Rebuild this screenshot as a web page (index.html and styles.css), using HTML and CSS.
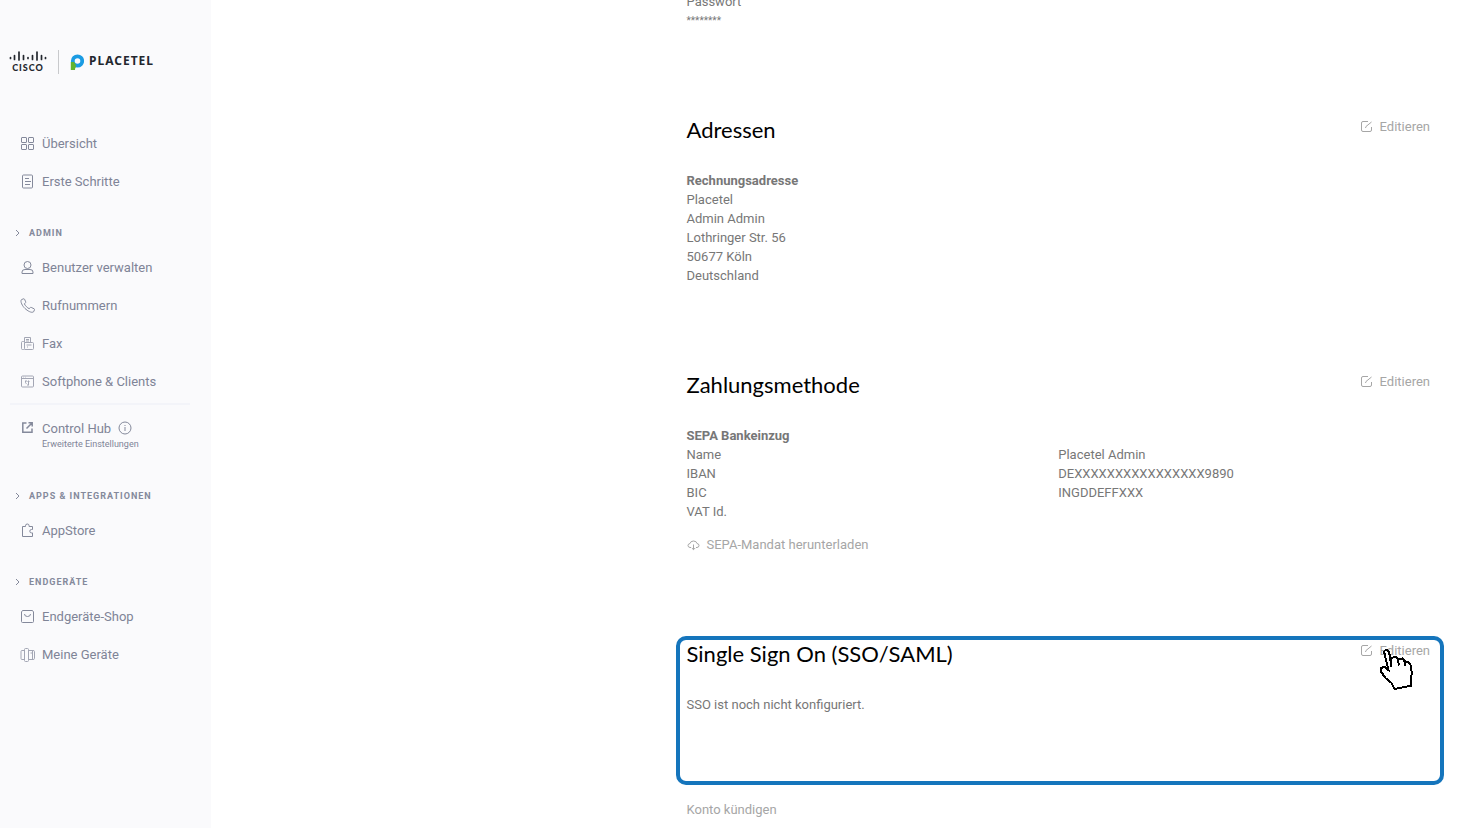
FILE: index.html
```html
<!doctype html>
<html lang="de">
<head>
<meta charset="utf-8">
<title>Placetel - Einstellungen</title>
<link rel="stylesheet" href="styles.css">
</head>
<body>

<div class="page">
	<nav class="sidebar">
		<a class="logo" href="#">
			<span class="cisco">
				<svg width="38" height="12" viewBox="0 0 38 12" fill="none" stroke="#23272e" stroke-width="1.700" stroke-linecap="round">
					<path d="M1.500 7.500v1M5.500 5.500v4M10 2v8M14.500 5.500v4M19 7.500v1M23.500 5.500v4M28 2v8M32.500 5.500v4M36.500 7.500v1"/>
				</svg>
				<span class="cisco_name">CISCO</span>
			</span>
			<span class="placetel">
				<svg width="14" height="17" viewBox="0 0 14 17">
					<circle cx="7.500" cy="7" r="4.700" fill="none" stroke="#1a9be3" stroke-width="3.800"/>
					<path d="M.8 8h3.400q.4 1.800 1.600 2.500v2.800q-.8.500-.8 2.700H.8z" fill="#62b32f"/>
				</svg>
				<span class="placetel_name">PLACETEL</span>
			</span>
		</a>

		<ul class="menu">
			<li><a href="#">
				<svg class="icon" viewBox="0 0 15 15"><rect x="1.500" y="1.500" width="5" height="5" rx=".5"/><rect x="8.500" y="1.500" width="5" height="5" rx=".5"/><rect x="1.500" y="8.500" width="5" height="5" rx=".5"/><rect x="8.500" y="8.500" width="5" height="5" rx=".5"/></svg>
				Übersicht</a></li>
			<li><a href="#">
				<svg class="icon" viewBox="0 0 15 15"><rect x="2.500" y="1" width="10" height="13" rx="1"/><path d="M5 4.500h4M5 7.500h6M5 10.500h5"/></svg>
				Erste Schritte</a></li>
		</ul>

		<button class="group" type="button"><svg class="arrow" viewBox="0 0 5 8"><path d="M1 1l3 3-3 3"/></svg>ADMIN</button>
		<ul class="menu">
			<li><a href="#">
				<svg class="icon" viewBox="0 0 15 15"><circle cx="7.500" cy="5" r="3.500"/><path d="M2 13.500v-1.500q0-2.500 3-2.500h5q3 0 3 2.500v1.500z"/></svg>
				Benutzer verwalten</a></li>
			<li><a href="#">
				<svg class="icon" viewBox="0 0 15 15"><path d="M3.600.8L1.500 1.600C-.2 3.400 2.600 8.300 5 10.500s6.600 5 8.700 3.200l.8-2q.2-.6-.4-.9l-2.900-1.400q-.5-.2-.9.2l-1.200 1.100C7.500 9.900 5.200 7.700 4.400 5.900l1.100-1.200q.4-.4.2-.9L4.500 1.200q-.3-.6-.9-.4z"/></svg>
				Rufnummern</a></li>
			<li><a href="#">
				<svg class="icon light" viewBox="0 0 15 15"><rect x="1.500" y="5.500" width="3" height="8" rx="1"/><path d="M4.500 6.500h8q1 0 1 1v5q0 1-1 1h-8M4.500 6V1.500h6v5M6 3.500h3M6 5h3M6.500 9h5M7 11h1"/></svg>
				Fax</a></li>
			<li><a href="#">
				<svg class="icon light" viewBox="0 0 15 15"><rect x="1.500" y="2" width="12" height="11" rx="1"/><path d="M1.500 4.500h12M3 3.200h.5M5 3.200h.5M5.500 6.500v2q0 1 1 1M6.500 6.500v1M8.500 6.500v4.500M7 11h2M9.500 7.500h-2"/></svg>
				Softphone &amp; Clients</a></li>
		</ul>

		<div class="hub">
			<svg class="icon bold" viewBox="0 0 15 15"><path d="M6.500 3H2.800v9.200H12V8.500M8.500 2.800h3.700v3.700M12 3L6.500 8.500"/></svg>
			<div>
				<div class="hub_title"><a href="#">Control Hub</a>
					<svg class="info" viewBox="0 0 14 14"><circle cx="7" cy="7" r="6"/><path d="M7 6v4M7 4v1"/></svg>
				</div>
				<div class="hub_sub">Erweiterte Einstellungen</div>
			</div>
		</div>

		<button class="group" type="button"><svg class="arrow" viewBox="0 0 5 8"><path d="M1 1l3 3-3 3"/></svg>APPS &amp; INTEGRATIONEN</button>
		<ul class="menu">
			<li><a href="#">
				<svg class="icon" viewBox="0 0 15 15"><path d="M2.500 3.500h3V2.800q0-1.800 1.800-1.800t1.800 1.800v.7h3.400v3h-1q-1.700 0-1.700 1.700t1.700 1.700h1v3.600h-10z"/></svg>
				AppStore</a></li>
		</ul>

		<button class="group" type="button"><svg class="arrow" viewBox="0 0 5 8"><path d="M1 1l3 3-3 3"/></svg>ENDGERÄTE</button>
		<ul class="menu">
			<li><a href="#">
				<svg class="icon" viewBox="0 0 15 15"><path d="M2.500 1.500h10l1 1.500v9.500q0 1-1 1h-10q-1 0-1-1V3zM4.500 5q0 2.500 3 2.500t3-2.500"/></svg>
				Endgeräte-Shop</a></li>
			<li><a href="#">
				<svg class="icon light" viewBox="0 0 15 15"><rect x="4.500" y="1.500" width="4" height="13" rx="1"/><path d="M4 3.500H2q-1 0-1 1v7q0 1 1 1h2M9 3.500h4q1.500 0 1.500 1v7q0 1-1.500 1H9M10.500 6h2.500M12.500 3.500v9"/></svg>
				Meine Geräte</a></li>
		</ul>
	</nav>

	<main class="main">
		<div class="content">
			<section class="section">
				<div>Passwort</div>
				<div class="secret">********</div>
			</section>

			<section class="section">
				<div class="head">
					<h2>Adressen</h2>
					<a class="edit" href="#"><svg class="pen" viewBox="0 0 13 13"><path d="M8 1.500H3q-1.500 0-1.500 1.500v7q0 1.500 1.500 1.500h7q1.500 0 1.500-1.500V7M5.500 8l.5-1.500L11.500 2"/></svg>Editieren</a>
				</div>
				<strong>Rechnungsadresse</strong>
				<div>Placetel</div>
				<div>Admin Admin</div>
				<div>Lothringer Str. 56</div>
				<div>50677 Köln</div>
				<div>Deutschland</div>
			</section>

			<section class="section">
				<div class="head">
					<h2>Zahlungsmethode</h2>
					<a class="edit" href="#"><svg class="pen" viewBox="0 0 13 13"><path d="M8 1.500H3q-1.500 0-1.500 1.500v7q0 1.500 1.500 1.500h7q1.500 0 1.500-1.500V7M5.500 8l.5-1.500L11.500 2"/></svg>Editieren</a>
				</div>
				<strong>SEPA Bankeinzug</strong>
				<dl class="bank">
					<dt>Name</dt><dd>Placetel Admin</dd>
					<dt>IBAN</dt><dd>DEXXXXXXXXXXXXXXXX9890</dd>
					<dt>BIC</dt><dd>INGDDEFFXXX</dd>
					<dt>VAT Id.</dt><dd></dd>
				</dl>
				<a class="download" href="#"><svg class="cloud" viewBox="0 0 13 13"><path d="M4 9.500H3Q1 9.200 1 7.500T3 5.500Q3.500 3 6.500 3T10 5.500q2 .2 2 2t-2 2H9M6.500 6.500v5M4.800 10l1.700 1.700L8.200 10"/></svg>SEPA-Mandat herunterladen</a>
			</section>

			<section class="section marked">
				<div class="head">
					<h2>Single Sign On (SSO/SAML)</h2>
					<a class="edit" href="#"><svg class="pen" viewBox="0 0 13 13"><path d="M8 1.500H3q-1.500 0-1.500 1.500v7q0 1.500 1.500 1.500h7q1.500 0 1.500-1.500V7M5.500 8l.5-1.500L11.500 2"/></svg>Editieren</a>
				</div>
				<div>SSO ist noch nicht konfiguriert.</div>
				<svg class="hand" viewBox="0 0 36 42"><path d="M6 3.500L8 1.500l3 2 2.500 15L12.500 10l5-1 2 1.500 1.500 7-1-6 4.500-1 2 2 1 5-1-4 4 .5 2 3 1.500 9-1.500 4 1 7.500-17 3.500-3-6-6-5-5-7V20l4-1 4 3z"/></svg>
			</section>

			<a class="quit" href="#">Konto kündigen</a>
		</div>
	</main>
</div>

</body>
</html>
```

FILE: styles.css
```css
*{ margin:0; padding:0; box-sizing:border-box;}
body{ font:13px/19px Roboto,"Liberation Sans",sans-serif; color:#777; background:#fff; overflow:hidden;}
a{ color:inherit; text-decoration:none;}
ul{ list-style:none;}
svg{ flex:none; fill:none;}

.page{ display:flex; height:100vh;}

/* sidebar */
.sidebar{ flex:none; width:211px; background:#fafafc; color:#7f8497;}
.logo{ display:flex; align-items:center; height:124px; padding:0 10px; color:#23272e;}
.cisco{ display:flex; flex-direction:column; align-items:center; width:49px; padding-right:12px; border-right:1px solid #c8c9cc;}
.cisco_name{ font:900 9px/12px Lato,sans-serif; letter-spacing:1px;}
.placetel{ display:flex; align-items:center; gap:5px; padding-left:11px;}
.placetel_name{ font:bold 12px/18px "Noto Sans",sans-serif; letter-spacing:1px; padding-bottom:2px;}

.menu a{ display:flex; align-items:center; gap:7px; height:38px; padding-left:20px;}
.icon{ width:15px; height:15px; stroke:#84899b; stroke-width:1;}
.light{ stroke:#a3a6b4;}
.bold{ stroke-width:1.5;}
.group{ display:flex; align-items:center; gap:9px; height:20px; margin:23px 0 5px; padding-left:15px; border:0; background:none; color:#84899b; font:bold 9px/20px Roboto,sans-serif; letter-spacing:1px;}
.arrow{ width:5px; height:8px; stroke:#84899b;}

.hub{ display:flex; gap:7px; margin:3px 21px 0 10px; padding:13px 0 13px 10px; border-top:2px solid #f3f4f9;}
.hub .icon{ margin-top:2px;}
.hub_title{ display:flex; align-items:center; gap:7px; height:20px;}
.hub_sub{ font-size:9px; line-height:12px;}
.info{ width:14px; height:14px; stroke:#84899b;}

/* content */
.main{ flex:1; display:grid; grid-template-columns:3fr 5fr;}
.content{ grid-column:2; margin-top:-8px; padding-right:49px;}
.section{ margin-bottom:86px;}
.secret{ font-size:10px;}
.head{ display:flex; justify-content:space-between; margin-bottom:27px;}
.head h2{ font:400 22px/28px Lato,sans-serif; color:#000;}
.edit,.download,.quit{ color:#a6a6a6;}
.edit{ display:flex; align-items:center; gap:7px; height:20px;}
.pen,.cloud{ width:13px; height:13px; stroke:#a6a6a6;}
.section strong{ display:block;}
.bank{ display:grid; grid-template-columns:1fr 1fr;}
.download{ display:flex; align-items:center; gap:7px; margin-top:14px;}

/* highlighted section with the pointer over it */
.marked{ position:relative; margin:-4px -14px 15px -11px; padding:0 10px 67px 7px; border:4px solid #1575bc; border-radius:10px;}
.hand{ position:absolute; top:8px; right:26px; width:36px; height:42px; fill:#fff; stroke:#000; stroke-width:2; shape-rendering:crispEdges;}
```
